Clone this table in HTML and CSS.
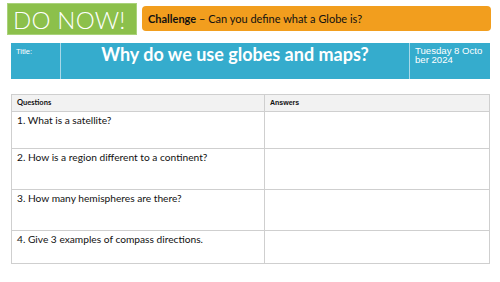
FILE: index.html
```
<!DOCTYPE html>
<html>
<head>
<meta charset="utf-8">
<link rel="stylesheet" href="styles.css">
</head>
<body>
<div class="slide">
  <div class="top">
    <div class="donow">DO NOW!</div>
    <div class="challenge"><b>Challenge</b> – Can you define what a Globe is?</div>
  </div>
  <div class="band">
    <div class="label">Title:</div>
    <div class="title">Why do we use globes and maps?</div>
    <div class="date">Tuesday 8 Octo ber 2024</div>
  </div>
  <table class="qa">
    <colgroup><col class="qcol"><col class="acol"></colgroup>
    <tr class="head"><th class="qh">Questions</th><th>Answers</th></tr>
    <tr class="r1"><td>1. What is a satellite?</td><td></td></tr>
    <tr class="r2"><td>2. How is a region different to a continent?</td><td></td></tr>
    <tr class="r3"><td>3. How many hemispheres are there?</td><td></td></tr>
    <tr class="r4"><td>4. Give 3 examples of compass directions.</td><td></td></tr>
  </table>
</div>
</body>
</html>
```
FILE: styles.css
```
html, body {
  margin: 0;
  padding: 0;
  background: #ffffff;
}
.slide {
  width: 500px;
  height: 282px;
  position: relative;
  overflow: hidden;
  font-family: Lato, "Open Sans", sans-serif;
}
.top {
  display: flex;
  align-items: flex-start;
  padding: 3px 0 0 7px;
  gap: 5px;
}
.donow {
  width: 130px;
  height: 32px;
  box-sizing: border-box;
  background: #8cc04b;
  border: 1px solid #a9d27a;
  color: #ffffff;
  font-weight: 300;
  font-size: 24px;
  line-height: 31px;
  padding-left: 5px;
  letter-spacing: 0.2px;
}
.challenge {
  margin-top: 3px;
  width: 349px;
  height: 25px;
  box-sizing: border-box;
  background: #f29e1e;
  border-radius: 4px;
  color: #111;
  font-size: 11px;
  line-height: 25px;
  padding-left: 6px;
}
.challenge b { font-weight: 700; }
.band {
  margin: 8px 0 0 11px;
  width: 479px;
  height: 36px;
  background: #35accd;
  display: grid;
  grid-template-columns: 50px 349px 80px;
  color: #ffffff;
}
.label {
  font-family: "Liberation Sans", Arial, sans-serif;
  font-size: 7.5px;
  padding: 4px 0 0 5px;
  border-right: 1px solid #a8d8e8;
}
.title {
  font-weight: 700;
  font-size: 18px;
  text-align: center;
  line-height: 20px;
  padding-top: 1px;
  border-right: 1px solid #a8d8e8;
}
.date {
  font-family: "Liberation Sans", Arial, sans-serif;
  font-size: 9.6px;
  line-height: 8.5px;
  padding: 4px 0 0 5px;
}
.qa {
  margin: 15px 0 0 11px;
  width: 478px;
  border-collapse: collapse;
  table-layout: fixed;
}
.qcol { width: 253px; }
.acol { width: 225px; }
.qa th, .qa td {
  box-sizing: border-box;
  border: 1px solid #cfcfcf;
  vertical-align: top;
  text-align: left;
  padding: 0 0 0 5px;
}
.qa th {
  font-family: "Liberation Sans", Arial, sans-serif;
  font-size: 7px;
  font-weight: 700;
  background: #f2f2f2;
  color: #111;
  height: 17px;
  line-height: 15px;
}
.qa th.qh {
  font-family: Lato, "Open Sans", sans-serif;
  font-size: 7.5px;
}
.qa td {
  font-size: 10.2px;
  color: #111;
  line-height: 14px;
  padding-top: 1px;
}
.r1 td { height: 37px; }
.r2 td { height: 41px; }
.r3 td { height: 41px; }
.r4 td { height: 33px; }
```
